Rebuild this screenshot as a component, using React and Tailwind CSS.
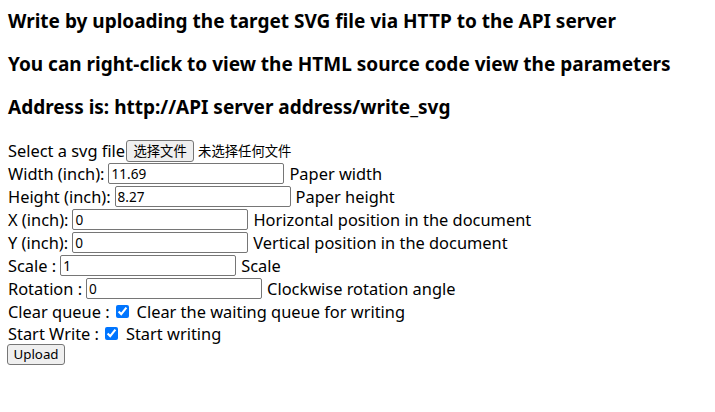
const body = { fontFamily: "'Noto Sans', 'Noto Sans CJK SC', sans-serif" };
const cjk = { fontFamily: "'Noto Sans CJK SC', 'Noto Sans', sans-serif" };

function Field({ label, value, hint }) {
  return (
    <div className="flex items-center h-[23px]">
      <span>{label}</span>
      <input
        type="text"
        defaultValue={value}
        className="ml-[4px] w-[176px] h-[21px] border border-[#767676] rounded-[2px] px-[2px] text-[13.6px] text-black bg-white outline-none"
        style={body}
      />
      <span className="ml-[5px]">{hint}</span>
    </div>
  );
}

function Check({ label, hint }) {
  return (
    <div className="flex items-center h-[22px]">
      <span>{label}</span>
      <input
        type="checkbox"
        defaultChecked
        className="ml-[6px] mr-[3px] w-[13px] h-[13px] accent-[#0075ff]"
      />
      <span className="ml-[5px]">{hint}</span>
    </div>
  );
}

export default function App() {
  return (
    <div className="bg-white text-black min-h-[412px] px-[8px] pt-[8px]" style={body}>
      <div className="flex flex-col gap-[17px]">
        <h3 className="h-[26px] leading-[26px] text-[19px] font-bold whitespace-nowrap">
          Write by uploading the target SVG file via HTTP to the API server
        </h3>
        <h3 className="h-[26px] leading-[26px] text-[19px] font-bold whitespace-nowrap">
          You can right-click to view the HTML source code view the parameters
        </h3>
        <h3 className="h-[26px] leading-[26px] text-[19px] font-bold whitespace-nowrap">
          Address is: http://API server address/write_svg
        </h3>
      </div>
      <div className="mt-[19px] text-[16.4px] leading-[23px] whitespace-nowrap">
        <div className="flex items-center h-[23px]">
          <span>Select a svg file</span>
          <button
            type="button"
            className="ml-[1px] h-[22px] w-[68px] border border-[#767676] rounded-[3px] bg-[#efefef] text-[13.33px] leading-[20px] text-black"
            style={cjk}
          >
            选择文件
          </button>
          <span className="ml-[4px] text-[13.33px]" style={cjk}>未选择任何文件</span>
        </div>
        <Field label="Width (inch):" value="11.69" hint="Paper width" />
        <Field label="Height (inch):" value="8.27" hint="Paper height" />
        <Field label="X (inch):" value="0" hint="Horizontal position in the document" />
        <Field label="Y (inch):" value="0" hint="Vertical position in the document" />
        <Field label="Scale :" value="1" hint="Scale" />
        <Field label="Rotation :" value="0" hint="Clockwise rotation angle" />
        <Check label="Clear queue :" hint="Clear the waiting queue for writing" />
        <Check label="Start Write :" hint="Start writing" />
        <div className="flex items-center h-[21px]">
          <button
            type="button"
            className="-ml-[1px] h-[21px] w-[58px] border border-[#767676] rounded-[3px] bg-[#efefef] text-[13.33px] leading-[19px] text-black"
            style={body}
          >
            Upload
          </button>
        </div>
      </div>
    </div>
  );
}
